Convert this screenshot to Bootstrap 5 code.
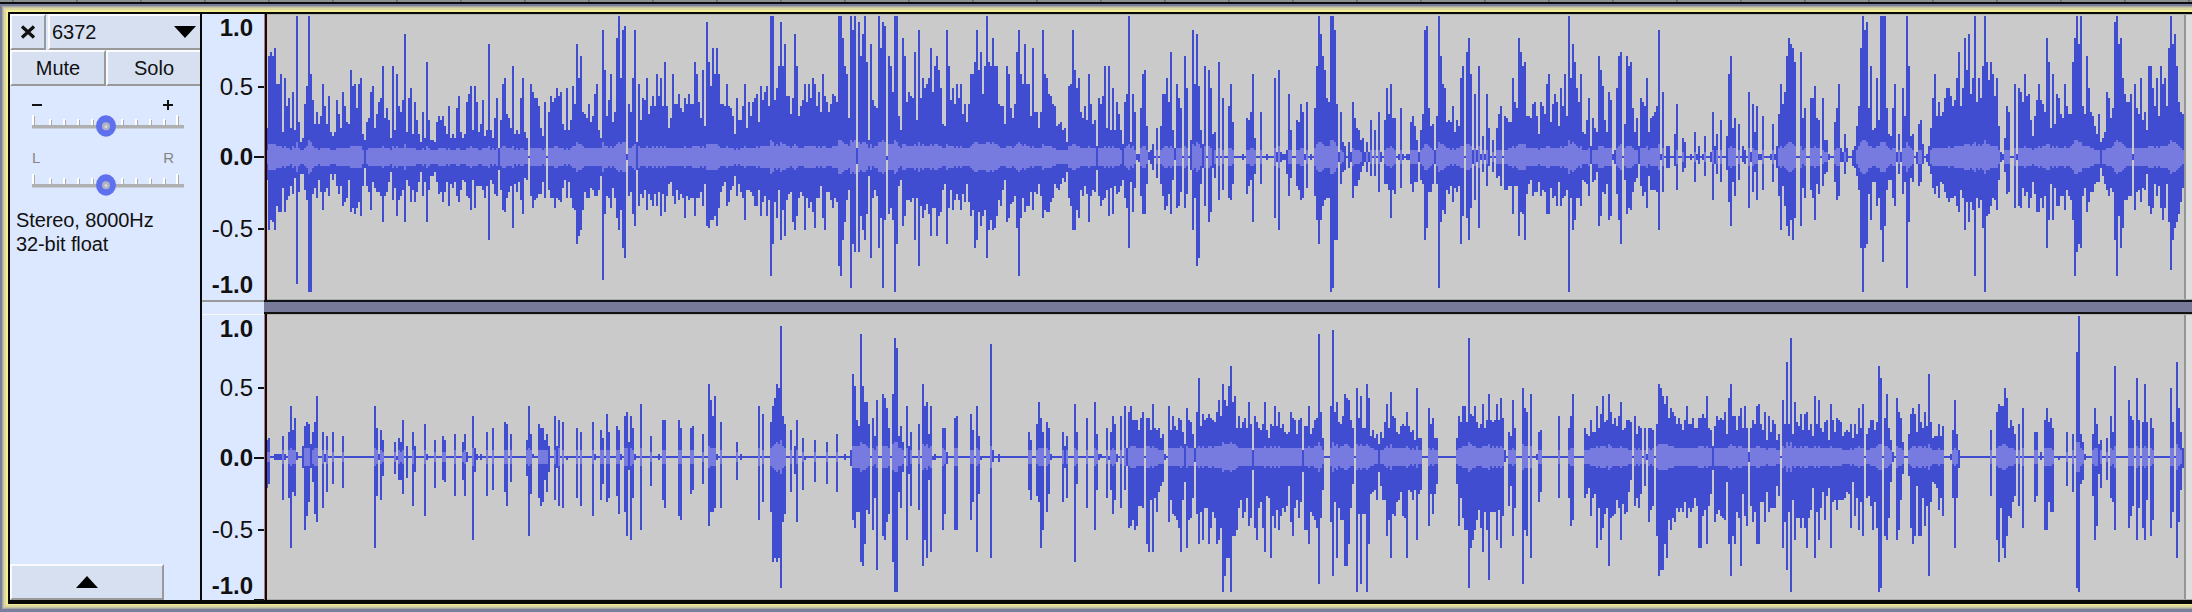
<!DOCTYPE html>
<html lang="en">
<head>
<meta charset="utf-8">
<title>Audio track</title>
<link href="https://cdn.jsdelivr.net/npm/bootstrap@5.3.0/dist/css/bootstrap.min.css" rel="stylesheet">
<style>
body{width:2192px;height:612px;background:#797d9e;font-family:"Liberation Sans",Arial,sans-serif;font-size:20px;line-height:24px;color:#111;overflow:hidden}
.timeline{height:4px;border-bottom:2px solid #0b0c10;background:repeating-linear-gradient(90deg,#8c9090 0 12px,#6c7070 12px 14px,#8c9090 14px 64px)}
.track-frame{width:2200px;height:603px;margin:2px 0 0 2px;padding:6px 0 5px 6px;box-shadow:inset 0 0 0 1px #aaa9a0,inset 0 0 0 2px #c6c3a0,inset 0 0 0 4px #dcd8a2,inset 0 0 0 6px #f4ee90}
.track-body{background:#080808;padding:2px 0 4px 2px;height:592px}
.panel{width:190px;background:#dce8ff}
.ctl{height:36px;background:#d6e0f1;border:2px solid #f9fbff;border-right-color:#999;border-bottom-color:#999;border-radius:0;padding:0;line-height:30px;color:#111;font-size:20px}
.ctl-close{width:36px}.ctl-name{margin-left:2px;border-right:0;padding-left:2px}
.ctl-mute{width:96px}.ctl-solo{border-right:0}
.ctl-fold{width:154px;height:36px}
.ends{margin:0 22px;height:20px;line-height:20px}
.pan{font-size:15px;color:#858585;margin-top:11px}
.knob{display:block;margin-left:22px}
.fmt{margin:12px 0 0 6px;line-height:24.3px;letter-spacing:-.1px}
.ruler{width:62px;margin-left:2px;background:#dce8ff}
.vscale{display:grid;font-size:24px;position:relative}
.vscale.ch1{grid-template-rows:28px 90px 50px 94px 18px 6px;height:286px}
.vscale.ch2{grid-template-rows:27px 92px 48px 96px 16px 7px;height:286px;border-top:1px solid #f8f8f8}
.vscale span{display:flex;align-items:center;justify-content:flex-end;gap:5px;white-space:nowrap;line-height:1}
.vscale span.b{font-weight:700;padding-right:11px}
.vscale span.z{padding-right:0;gap:1px}
.vscale span i{width:6px;height:2px;background:#111;flex:none}
.vscale span.z i{width:10px}
.lasttick{width:10px;height:2px;background:#111;align-self:end;justify-self:end}
.rsplit{height:14px;border-top:2px solid #999;background:#dce8ff}
.edge{width:3px;background:#2b0002;border-left:1px solid #888}
.wave{height:286px;background:#cacaca;border-top:1px solid #b5b5ad;border-bottom:1px solid #aaa;box-sizing:border-box}
.wave svg{display:block;margin:-1px 0;flex:none}
.tail{width:12px;border-left:2px solid #959595;background:#dedede}
.gutter{height:14px;background:#777a98;border-top:2px solid #0c1216;border-bottom:2px solid #111;margin-left:-3px;position:relative}
</style>
</head>
<body>
<div class="timeline"></div>
<div class="track-frame">
 <div class="track-body d-flex">
  <aside class="panel d-flex flex-column">
   <div class="d-flex">
    <button class="ctl ctl-close btn d-flex align-items-center justify-content-center"><svg width="16" height="14" viewBox="0 0 16 14"><path d="M2 1.5 14 12.5M14 1.5 2 12.5" stroke="#111" stroke-width="3.2"/></svg></button>
    <button class="ctl ctl-name btn flex-grow-1 d-flex align-items-center justify-content-between pe-1"><span>6372</span><svg width="22" height="12"><path d="M0 0H22L11 12Z"/></svg></button>
   </div>
   <div class="d-flex"><button class="ctl ctl-mute btn">Mute</button><button class="ctl ctl-solo btn flex-grow-1">Solo</button></div>
   <div class="ends d-flex justify-content-between align-items-center" style="margin-top:9px"><svg width="10" height="12"><path d="M0 6H10" stroke="#111" stroke-width="2"/></svg><svg class="me-1" width="12" height="12"><path d="M1 6H11M6 1V11" stroke="#111" stroke-width="2"/></svg></div>
   <svg class="knob" width="154" height="22" data-slider></svg>
   <div class="ends pan d-flex justify-content-between"><span>L</span><span class="me-1">R</span></div>
   <svg class="knob" style="margin-top:6px" width="154" height="22" data-slider></svg>
   <div class="fmt">Stereo, 8000Hz<br>32-bit float</div>
   <button class="ctl ctl-fold btn mt-auto d-flex align-items-center justify-content-center"><svg width="22" height="12"><path d="M0 12H22L11 0Z"/></svg></button>
  </aside>
  <div class="ruler">
   <div class="vscale ch1"><span class="b">1.0</span><span>0.5<i></i></span><span class="b z">0.0<i></i></span><span>-0.5<i></i></span><span class="b">-1.0</span></div>
   <div class="rsplit"></div>
   <div class="vscale ch2"><span class="b">1.0</span><span>0.5<i></i></span><span class="b z">0.0<i></i></span><span>-0.5<i></i></span><span class="b">-1.0</span><i class="lasttick"></i></div>
  </div>
  <div class="edge"></div>
  <main class="flex-grow-1">
   <div class="wave d-flex"><svg id="left" width="1917" height="286" viewBox="0 0 5751 858" shape-rendering="crispEdges"></svg><div class="tail"></div></div>
   <div class="gutter"></div>
   <div class="wave d-flex"><svg id="right" width="1917" height="286" viewBox="0 0 5751 858" shape-rendering="crispEdges"></svg><div class="tail"></div></div>
  </main>
 </div>
</div>
<script src="https://cdn.jsdelivr.net/npm/bootstrap@5.3.0/dist/js/bootstrap.bundle.min.js"></script>
<script>
// Peak blocks: [start, upper peaks, lower peaks]. One value per 6-unit column;
// "@n" moves to column position n, "v*n" repeats, "." is silence.
const left=[
[260,`@18 385 168 156 168 144 252*2 222 396 234 318 294 384 276 390 48 366 426 414 312 258 48 222 300 372 336 372 348 252 318 372 288 396 408 396 300 342 384 276 318 366 372 210 258 252 324 252 234 402 420 366 354 276 258 384 342 306 294 198 354 324 360 414 198 390 222 318 336 300 102 396 294 264 402 306 360 402 426 336 414 186 360 420*2 426 366 348 360 348 378 402 318 414 402 414 324 288 396 414 402 306 282 258 390 258 306 396 372 300 408 390 132 390 414 354 294 444 360 252 234 342 354 384 198 402 390 402 294 234 396 414 468 252 276 294*2 318 384 408 306 468 336 288 306 294 264 288 276 372 390 264 390 360 258 312 132 234 168 336 342 354 312 366 348 282 252 390 414 90 210 348 300 222 366 336 114 48 234 90 78 462 312 336 234 90 426 252 360 294 300 234 342 318 288 318 222 288 234 318 186 318 384 354 222 312*2 282 324 336 294 312 282 312*2 186 222 306 354 210 378 66 186 258 144 222 144 222 312*2 318 252 318 324 348 402 294 360`,
`@18 540 690 660 666 690 618 636*2 564 636 600 588 558 582 534 852 576 522*2 570 600 876*2 582 564 594 540 576 630 576 564 588 522 540 522 558 582 558 618 606 594 540 636 624 642 624 606 648 558 504 558 576 630 546 564 576*2 588 666 588 576 546 516 600 564 648 600 588 570 666 540 558 606 570 606 576 546 516 588 546 666 570 528*2 516 546 582 576 606 576 546 618 552 564 546 588 606 570 540 546 588 594 630 540 624 558*3 570 594 558 720 540 552 582 588 510 570 630 636 594 576 558 684 552 576 546 600 642 534 540 474 588 624 600 594 582*2 546 594 474 570 594*2 624 594 600 606 564 540 594 546 594 624 630 732 708 690 630 576 594*2 564 570 588*2 570 528 840 642 588 594 624 564 594 654 690 630 744 774 480 588 576 642 678 510 618 582 594 570 630 582 600 618 582 618 576 648 582 636 588 552 546 588 612 570 600 582 594 654 588 600 594*2 648 594*2 576 618 552 678 684 660*2 648 678 624 576 558 546 618 606 570 558 528 588 552`],
[740,`@0 360 318 252 384 306 348 306 294 282 366 258 300 276 258 318 @90 48*2 300 264 198 66 198 132 288*2 342 294 102 198 348 318 300 252 306 252 294 234 252 318 276 336 222 288 306 336 312 282 288 306 @294 48*2 114 198 222 354 48 90 48 444 66 168 102 48 186 420 132 300 318 324 48 144 66 78 468 168 198 276 @462 48*2 348 390 114 168 306 276 288 294 156 360 90 294 234 264 252 234 144 276 198 168 210 264 372 378 90 198 300 264 312 252 294 252 342 312 366 312 @690 222*2 186 90 210 156 282 198 48 186 198 114 198*2 312 318*2 372 198 222 324 354 312 156 90 222 252 132 252*2 348 144 336*2 384 336 90 222 234 282 288 312 318 378 372 366 390 384 426 258 252 90 210 264 234 336 354 318 360 222 312 372 360 438 294 312 288 198 384 198 390 264 390 306 342 390 432 306 282 48 426 282 336 462*2 324 222 210 378 456 450 432 . 384 . 378 282*2 234 306 156 390 444 252 294 324 . 168 264 . 420 90 252 102 258 390 432 198 . 210 264 402 396 . 186`,
`@0 576 594 660 570*2 576 588 618*2 570 648 606 588 648 600 828 732 606 654 570 720 630 708 600 582 576 666 690 648 594 576 588 690 594 624 606 636 684 594*2 558 654 690 576*2 600 624 594 606 798 828 720 666 600 570 864 732 756 492 756 648 690 720 642 528 774 594 570 588 744 654 864 660 480 642 624 660 876 732 558 540 678 648 600*2 606 594 720 594 798 618 654 630 612 642 708 624*2 708 648 636 570 552 732 624 570 630 600 582 600 630 582 606 552 606 648 630 744 720 636 678 648 630 774 690 660 690 684 648 600 618 570 540 666 654 612 606 588 684 828 654 594 636 618*2 576 630 576 582 552 588 654 630 636*2 606 594 552 564 570 552 534 546 516 594 618 690*2 630 654 570 588 558 582 666 588 570 576 510 588 618 600 594 570 648 564 642 558 582 576 558 540 594 624 744 546 636 564 480 486 588 642*2 552 480 492 510 . 534 . 552 588 630 618 582 642 540 480 624 618 576 . 624 582 . 510 690 594 798 774 552 504 618 . 666 636 504 534 . 600`],
[1220,`@0 . 294 .*2 318 252 366 @66 462 . 354 360 336 222 414 .*2 336 .*2 462 .*3 234 456 210 456 462*2 450 282 390 .*2 360 366 312 336 462 306 . 462 . 324 198 48 102 168 210 294 306 48*2 90 312 456 336 426 438 . 426 456 306 354 384 390 420 414 456 426 456 360 . 390 . 336 456 . 360 264 342 252 354*2 . 462 324 462 . 462*2 366 348 378 420 456 390 342 90 78 324 378 372 450 348 48 168 252 264 366 360 366 318 396 360 378 234 198 . 156 114 222 450 282 450 198 462 408 462 282 384 . 420 . 384 342 318 . 348 354 366*2 234 306 324 114 156 198 186 348*2 354 312 306 348 402 306 318 342 252 222 366 312 282 306 378 264 318 222 348 48 234 132 186 264 306 222 396 402 360 294 438 354 384 396 168 210 258 360 396 276 300 462 450 264 168 156 . 372 168 198 186 324 396 354 438 294 306 318 234 396 354 348 336 318 90 462 276 . 438*2 .*2 402 312 .*2 414 426 .*2 462 . 396 462 438`,
`@0 . 570 .*2 594 600 552 @66 480 . 582 558 540 666 522 .*2 552 .*2 480 .*3 654 486 690 486 480*2 522 588 534 .*2 558 570 600 594 480 564 . 480 . 588 660 732 660 618 600 594*2 876 864 720*2 486 552 516 510 . 504 486 594 558*2 540 516 498 486 516 486 528 . 528 . 576 486 . 552*2 570 654 570 582 . 480 564 480 . 480*2 552 576 546*2 486 540 552 720 684 576*2 552 492 552 864 666 630 642 570 582 558 606 564 576 558 732 648 . 654 720 624 492 600 486 684 480 516 480 558 498 . 516 . 534 528 558 . 570*2 558*2 642 558*2 708 636 642 720 582 552 540 588 576*2 546 588 570 576 642*2 564 594 588 618 546 618 594 588 570 876 594 690 660 594*2 618 540 546 552 588 492 546 540 516 678 648 576 582 552 660 648 480 492 582 660 732 . 540 642 624 630 576 546 534 492 558 588 576 624 528 570*3 576 690 480 576 . 504*2 .*2 498 570 .*2 516 504 .*2 480 . 546 480 492`],
[1700,`@0 . 462 408 .*2 456 336 438 402 . 360 .*2 408 222 168 384 354 . 372 . 438 450 . 276 456 312 396 318 462*2 348 .*3 462 372 462 438 342 252 312 276 168 114 132 144 186 .*2 156 354 324 .*2 294*2 258 354 360 . 294 420*2 462 .*2 366 324 252 444 456 402 444 .*2 450 438 378 318 144 48 90 66 324 198 390 384 234 360 48*3 324 402 408 324 252 456 402 456 264 348 48 198 408 402 . 456 372 360 432 . 462 438 384 294 222 348 306 348 336 294 264*2 288 318 300 234 156 318 264 114 210 102 282 234 48 306 234 294 198 48 186 240 186 222 288 234 378 456 462 414 318 336 .*2 252 462 264 276 306 222 288 282 360 408 348 300 252 300 312 336 114 186 384 222 372 282 294 342 354 252 318 342*2 186 114 48 132 48 318 342 168 264 336 348 378 402 342 426 414 396 276 294 354 324 66 48 132 114 234 282 306*2 282 462 252 324 342 234 360 336 390 198*2 264 318 234 348 198 252 234 318 144 48 132 102 198 306 336 342`,
`@0 . 480 528 .*2 486 600 492 522 . 546 .*2 510 606 678 546 588 . 540 . 486 492 . 624 486 576 516 600 480*2 570 .*3 480 546 480 504 588 690 558 618 678 708 660 720 654 .*2 678 564 594 .*2 570 594 660 552 582 . 558 522 516 480 .*2 546 600 588 486*2 522 486 .*2 498 504 528 570 744 876 744 732 582 660 546*2 618 594 690 786 678 570 540*2 594 618 486 522 486 582 546 864 666 534 546 . 492 558 546 492 . 486 498 522 564 582 558 594 546 552 576 594 606 594*2 588 618 636 570 594 690 606 666 606 630 828 594 624 600 684 876 648 642 618 594 600 630 540 486 480 516 582 576 .*2 624 480 618 624 564 588 576 624 594 546 582 636*2 594 624 588 744 660 552 660 564 618*2 588*2 630 570 588 600 660 828 756 732 744 588 564 636 606 576*2 552 546*2 504 528 552 570 588 564 576 720 828 648 744 684 600*2 588*2 @1296 480 630 576 570 606 564 570 522 618 642 624 552 588 558 624 660 624 552 666 810 720 684 666 642 606 564`]];
const right=[
[260,`@18 414 408 @42 456*4 402 456 . 390 312 384 348 450 .*2 432 372 360 366 426 390 360 282 .*2 390 456 402 .*2 390 @246 402 @342 312 378 456 384 414 @402 420 . 408 420 354 . 432 @456 390 432 @492 366 456 @522 414 @546 402 414 @582 396 @606 420 396 450 @636 342 438 456 . 456 @678 390 @696 378 @732 360 366 @750 396 @798 414 312 396 456 @834 366 378*2 414 396 432 @882 342 432 354 . 360 @948 378 @960 390 @996 360 456 @1020 384 408 @1038 336 390 @1068 372 384 456 @1092 342 330 420 342 378 456 @1140 306 @1170 402 @1194 456 @1206 354*2 @1254 354 378 @1290 378 372 @1326 396 @1344 246 294 342 282 456 . 360 @1428 420`,
`@18 558 546 @42 474*4 594 474 . 588 738 570 582 474 .*2 498 684 642 600 498 540 636 660 .*2 618 480 570 .*2 546 @246 558 @342 738 582 474 594 522 @402 516 474 534*2 576 . 528 @456 612 510 @492 642 474 @522 558 @546 534 540 @582 582 @606 534 582 480 @636 714 510 474 . 474 @678 582 @696 564 @732 570 612 @750 540 @798 522 702 576 @834 588 612 600 534 570 510 @882 594 498 612 . 618 . 474 @948 588 @960 612 @996 642 474 @1020 594 546 @1038 600 588 @1068 582 636 474 @1092 630 702 504 714 588 474 @1140 684 @1170 552 @1194 474 @1206 594 618 @1254 642 654 @1290 576 564 @1326 546 @1344 672 630*2 618 474 . 618 @1428 534`],
[740,`@0 456 @54 312 . 336 @90 360 312 288 246 258 72 342 366 .*2 384 . 432 354 .*2 408 @222 414 @258 420 @288 396 @312 456 @330 444 216 252 354 372 96 252 300*2 366 . 348 402 294 .*2 276 288 318 378 . 276 108 138 402 372 420 . 312 432 390 @534 366 . 246 312 300 396 312 462 456 @606 378*2 450 @642 348 342 @690 336 384 . 312 402 @750 126 444 @774 456 @864 390 414 @888 366 300 348 390 . 360 378 456 @966 390 432 402 @1002 306 390 @1038 348 @1062 300 396 456*2 @1098 378 . 390 342 366 456 . 342 . 312 438 330 312 354*3 384 348 330 . 348*2 384 306 378 384 378 408 396 456 . 312 384 342 372 384 348 354 390 426 318 354 360 396 438 330 228 372 336 354 348 336 348 354 360 330 294`,
`@0 474 @54 654 . 600 @90 630 780 768 780 768 858 660 636 .*2 570 . 516 660 .*2 564 474 @222 540 @258 546 @288 570 @312 474 @330 492 654 678 630*2 780 792 726 624 636 . 684 588 804 .*2 702 714 660 636 . 780 870*2 570 618 510 . 714 516 612 @534 624 . 792 714 768 534 750 474*2 @606 684 636 486 @642 684*2 @690 654 600 . 750 576 474 @750 768 480 @774 480 @864 564 594 @888 582 600 738 684 . 630 576 474 @966 600 498 588 @1002 780 546 @1038 618 @1062 684 564 474 @1098 588 474 564 636 594 480 . 618 . 564 492 678 672 654 684 672 612*2 618 . 726 750 594 750 588 630 570 552 540 474 . 660 594 636 642 654 678 750 594 540 738 654 648 588 480 636 726 630 714 618*2 726 678 630 648 726 714`],
[1220,`@0 342 246 294 312 252 192 300 282 378 342 378 360 348 378 300 366 444 342 360 378 384 366 300 384 408 366 372 312 372 330 378 366 390 396 390 330 348 354 396 354 348 444 372*2 312 396 378 354 348 96 330 408 .*3 312 84 330 300 360 366 342 276 288 294 354 378 . 258 348 282 378*2 246 288 402 384 408 396 426 390 408 360 306 378 270 342 348 390 396 372 366 372 330 372 390 384 414 258 408*2 .*3 318 366 348 408*2 @708 408 342 360 312*2 360 108 336 342 312 360 378 366 306 378 354 276 354 360 354 306 354 288 348 444 . 390 402 294 378 .*3 258 318 330 . 276 .*2 456 390 384 @1014 342 @1044 378 342 276 @1092 378 396 402 354 390*2 312 378 336 282 360 354 276 330 366 348 372 342 300 384 378 354*2 360 . 342 396 372 378 . 378 456 378*2 384 . 366 246 258 282 306 282 348 318 330 342 366 348 366 384 354 312 366*2 348 378*2 348`,
`@0 678 870 822 768*2 870 702*2 684 618 594 648 630 588 672 648 504 678 714 618 600 678 750 582 588 768 642 678 624 684 642 618 630 612 552 660 702 618 594 648 600 510 684*2 726 630 642 654 678 846 648 564 .*3 660 822 600 768 618 654*2 792*2 726 618 546 . 870 636 846 636*2 870 726 576 570 564 594 510 552 594*2 702 654 768 636 642 600 594 570 642 648 768 564 570 594 564 714 576 564 .*3 672 576 636 576 546 @708 546 672 588 648 684*2 858 738 714 684 654 624 678 750 630 684 834 630*3 714 624 738 642 480 . 612 552 702 618 .*3 846 684 702 . 768 .*2 474 600 570 @1014 588 @1044 588 672 654 @1092 588 576 558 642 588 576 738 618 714 678 636 618 792 648 642 636 594 618 714 606 636 630 570 534 . 612 588 618 576 . 552 474 660 624 612 . 702 822 804*2 726 768 654 684 648 660 618 630 618 630 600 648 618 630 618 588 612 738`],
[1700,`@0 348 336 348 282 378 384 432 372 342 354 348 354 330 396 288 246 342*2 384 342 318 378 312 378 450 378 354 366 312 306 366 384 330 414 342 390 354 366 414 396 . 294 366 180 366 108 396 300 360 372 336 384 336 330 384 366 402 282 366 294 378 390 360 354 414 306 354 390 348 354 360 402 390 384 390 366 408 366 396 318 378 306 . 396 378 354*2 384 360 192 228 . 348 276 378 414 450 . 288 330 348 420 .*2 396 336 318 336 390 306 360 378 330 372 216 360 408 402*2 366 402 372 .*3 456 384 294 396 444 @870 384 @888 330 306 312*2 258 288 378 354 372 396 . 366 . 318 @1002 390*2 . 450 . 354 318 360 348 378 @1098 390 .*2 396 . 150 42 396 420 456 @1176 396 318 366 426 414 @1218 408 . 342 390 192 @1284 294 342 354 . 228 354 . 360 246 360 . 348 378 @1410 258 360 . 180 318 390 438`,
`@0 738 642 624 726 612 576 504 660 636 624 642 648 654 540 726 822 702 726 630 648 792 576 642 672 480 612 660 630 726*2 600*2 660 570 630 618*3 552 582 . 738 660 804 630 870 594 714 648*2 678 648 678 738 648 624 558 768 630 714 618 570 654 582 558 738 600 594 624 594*3 588 570 576 678 540 642 588 684 600 702 . 588 582 612 684 600 678 870 858 . 702 714 648 540 480 . 714 684 594 516 .*2 522 678 726 702 552 702*2 588 672 612 822 600 540 546 558 624 588 642 .*3 474 588 738 588 498 @870 582 @888 714 780 618 738 768 702 642 648 600 582 . 612 . 678 @1002 600 582 . 474 . 684*2 600 630*2 .*2 474 @1098 552 .*2 570 . 858 870 546 534 474 @1176 582 714 672 516 558 @1218 534 . 588 600 684 @1284 678 642 612 . 714 618 . 678 714 594 . 702 654 @1410 678 630 . 768 660 564 498`]];
function expand(text,shift,mid,out,key){
  let x=0;
  for(const tok of text.trim().split(/\s+/)){
    if(tok[0]==='@'){x=+tok.slice(1);continue}
    const [v,n]=tok.split('*');
    for(let i=0;i<(+n||1);i++,x+=6){
      const c=(x+shift)/6;
      (out[c]=out[c]||{u:0,d:0})[key]=v==='.'?0:Math.abs(v-mid);
    }
  }
}
function draw(id,blocks,mid,top){
  const cols={};
  for(const [start,up,down] of blocks){
    const shift=(start-268)*3;
    expand(up,shift,mid,cols,'u');expand(down,shift,mid,cols,'d');
  }
  const y0=mid-top,amp=c=>cols[c]?(cols[c].u+cols[c].d)/2:0;
  let peak=`M0 ${y0-3}H5751V${y0+3}H0Z`,rms='';
  for(const k of Object.keys(cols).map(Number).sort((a,b)=>a-b)){
    const {u,d}=cols[k],x=k*6+3;
    if(u<5&&d<5)continue;
    peak+=`M${x} ${y0-Math.max(u,3)}h6V${y0+Math.max(d,3)}h-6Z`;
    const near=(amp(k-2)+amp(k-1)+amp(k)+amp(k+1)+amp(k+2))/5;
    if(Math.min(u,d)>=42){
      const r=Math.round((9+.055*amp(k)+.06*near)/6)*6+3;
      rms+=`M${x} ${y0-r}h6V${y0+r}h-6Z`;
    }
  }
  document.getElementById(id).innerHTML=`<path d="${peak}" fill="#404dd0"/><path d="${rms}" fill="#777bdf"/>`;
}
draw('left',left,471,42);
draw('right',right,465,36);
// Slider scale, tick marks and knob
document.querySelectorAll('[data-slider]').forEach(s=>{
  let t='';
  for(const x of [0,17,31,45,59,89,103,117,131,144]){
    const y=x===0||x===144?0:4;
    t+=`<rect x="${x}" y="${y}" width="2" height="${10-y}" fill="#fff"/><rect x="${x+2}" y="${y+1}" width="1" height="${9-y}" fill="#aaa"/>`;
  }
  s.innerHTML=t+'<rect y="10" width="152" height="3.5" fill="#b0b0b0"/><ellipse cx="74" cy="11" rx="10" ry="10.7" fill="#5f70ee"/><circle cx="74" cy="11.3" r="4" fill="#aeb2c4"/><circle cx="74" cy="11.5" r="1.6" fill="#d5d5d5"/>';
});
</script>
</body>
</html>
